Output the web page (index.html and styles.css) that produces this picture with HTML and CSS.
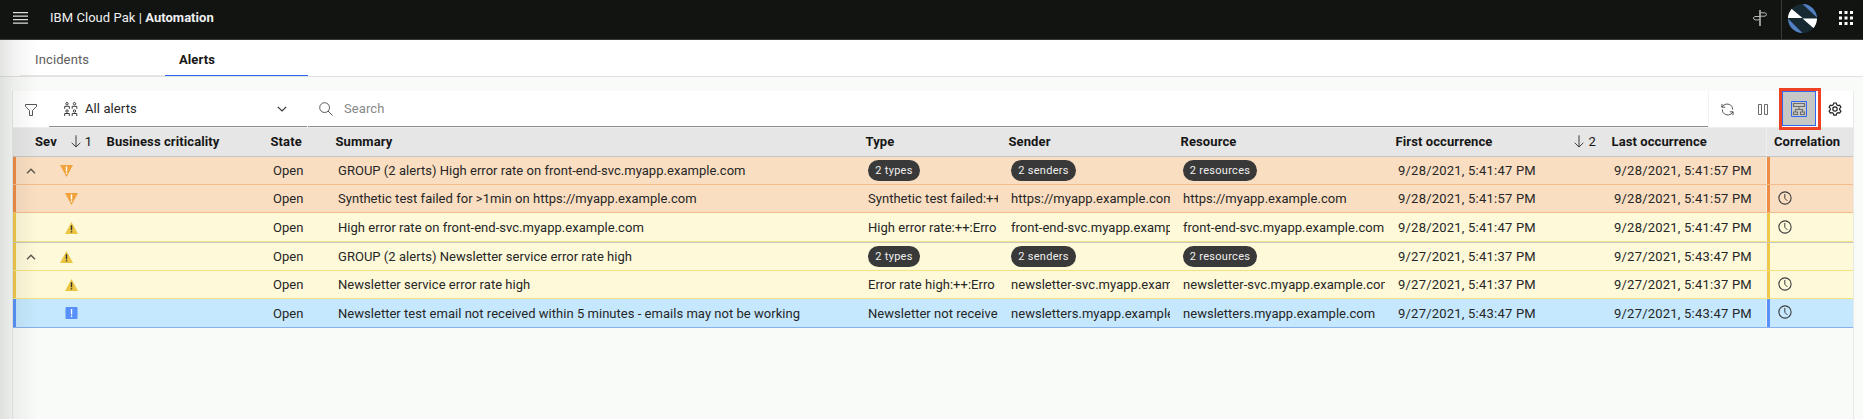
FILE: index.html
```
<!DOCTYPE html>
<html lang="en">
<head>
<meta charset="utf-8">
<title>Alerts</title>
<link rel="stylesheet" href="styles.css">
</head>
<body>
<svg class="defs" aria-hidden="true">
  <symbol id="tri-down" viewBox="0 0 13 12"><path d="M0 0h13L6.5 12z" fill="#f1a23c"/><path d="M5.8 1.5h1.4v5H5.8zM5.8 7.5h1.4v1.4H5.8z" fill="#fff"/></symbol>
  <symbol id="tri-up" viewBox="0 0 13 12"><path d="M6.5 0L13 12H0z" fill="#ecc642"/><path d="M5.8 3.2h1.4v5H5.8zM5.8 9.2h1.4v1.4H5.8z" fill="#333"/></symbol>
  <symbol id="square" viewBox="0 0 12 12"><rect width="12" height="12" rx="1" fill="#5790fa"/><path d="M5.4 2h1.3v5.4H5.4zM5.4 8.5h1.3v1.4H5.4z" fill="#fff"/></symbol>
  <symbol id="clock" viewBox="0 0 14 14"><circle cx="7" cy="7" r="6.1" fill="none" stroke="#3c3c3c" stroke-width="1.1"/><path d="M6.8 3v4.3l2.6 2.6" fill="none" stroke="#3c3c3c"/></symbol>
  <symbol id="arrow" viewBox="0 0 10 13"><path d="M5 .3v11.6M.7 7.8L5 12l4.3-4.2" fill="none" stroke="#3c3c3c"/></symbol>
  <symbol id="caret" viewBox="0 0 10 6"><path d="M1 5.2l4-4 4 4" fill="none" stroke="#5a554f" stroke-width="1.4"/></symbol>
</svg>
<header class="topbar">
  <svg class="menu" viewBox="0 0 15 12"><path d="M0 .7h15M0 4.2h15M0 7.7h15M0 11.2h15" stroke="#ddd" stroke-width="1.2"/></svg>
  <div class="brand"><span class="brand-name">IBM Cloud Pak |</span> <b>Automation</b></div>
  <svg class="signpost" viewBox="0 0 16 16" fill="none" stroke="#b5b5b5"><path d="M8 0v16" stroke-width="1.6"/><path d="M7.500 2.800h5.500l2 1.700-2 1.700H7.500M8 6.500H3L1 8.200l2 1.700h5"/></svg>
  <div class="account">
    <svg class="avatar" viewBox="0 0 29 29"><clipPath id="round"><circle cx="14.500" cy="14.500" r="14.500"/></clipPath><g clip-path="url(#round)"><path d="M0 0h29v29H0z" fill="#172931"/><path d="M14.500 0H29v13.500zM0 14.500V29h14.500z" fill="#537fc3"/><path d="M0 3.500h2L14.500 14H0zM14.500 14.500H29V25h-2.500z" fill="#fff"/></g></svg>
    <svg class="apps" viewBox="0 0 14 14" fill="#fff"><path d="M0 0h3v3H0zM5.500 0h3v3h-3zM11 0h3v3h-3zM0 5.500h3v3H0zM5.500 5.500h3v3h-3zM11 5.500h3v3h-3zM0 11h3v3H0zM5.500 11h3v3h-3zM11 11h3v3h-3z"/></svg>
  </div>
</header>
<nav class="tabs"><div class="tab">Incidents</div><div class="tab active">Alerts</div></nav>
<main class="panel">
  <div class="toolbar">
    <div class="filter"><svg width="12" height="12" viewBox="0 0 12 12"><path d="M.5.5h11v1.900L7.500 6.500v5h-3v-5l-4-4.100z" fill="none" stroke="#555"/></svg></div>
    <div class="select">
      <svg width="14" height="14" viewBox="0 0 14 14" fill="none" stroke="#3c3c3c"><circle cx="3" cy="1.700" r="1.200"/><circle cx="10.500" cy="1.700" r="1.200"/><circle cx="3" cy="9" r="1.200"/><circle cx="10.500" cy="9" r="1.200"/><path d="M.7 6.800V4.300h4.600v2.500M8.200 6.800V4.300h4.600v2.500M.7 14v-2.500h4.600V14M8.200 14v-2.500h4.600V14"/></svg>
      <span class="select-label">All alerts</span>
      <svg class="chevron" width="10" height="6" viewBox="0 0 10 6"><path d="M.8.8L5 5 9.200.8" fill="none" stroke="#333" stroke-width="1.200"/></svg>
    </div>
    <div class="search"><svg width="14" height="14" viewBox="0 0 14 14" fill="none" stroke="#5a5a5a"><circle cx="5.600" cy="5.600" r="4.900"/><path d="M9 9l4.500 4.500"/></svg><span>Search</span></div>
    <div class="actions">
      <svg class="refresh" viewBox="0 0 14 14" fill="none" stroke="#444"><path d="M1 4.500h3.500M1 1v3.500C3 .5 9 0 11.500 3.500c.8 1 1 2 1 3.500M13 9.500H9.500M13 13V9.500C11 13.500 5 14 2.500 10.500c-.8-1-1-2-1-3.500"/></svg>
      <svg class="pause" viewBox="0 0 10 11" fill="none" stroke="#6a6a6a"><path d="M.5.5h3v10h-3zM6.500.5h3v10h-3z"/></svg>
      <div class="highlight"><div class="toggle"><svg viewBox="0 0 16 16" fill="none"><path d="M2.500 2.500h11v3h-11zM8 5.500V9M4.500 11V8.500h7V11M2.500 11h4v2.500h-4zM9.500 11h4v2.500h-4z" stroke="#6d6e6c" stroke-width="1.100"/><path d="M.5.5h15v15H.5z" stroke="#2f67f0"/></svg></div></div>
      <svg class="gear" viewBox="0 0 14 14" fill="none" stroke="#222" stroke-width="1.200"><path d="M5.800 1h2.400l.5 1.700 1.300.8 1.700-.4 1.200 2.100-1.200 1.200v1.400l1.200 1.200-1.200 2-1.700-.4-1.300.8-.5 1.700H5.800l-.5-1.700-1.300-.8-1.700.4-1.200-2 1.200-1.200V6.400L1.100 5.200l1.200-2.100 1.700.4 1.300-.8z"/><circle cx="7" cy="7" r="2.200"/></svg>
    </div>
  </div>
  <div class="row head">
    <div class="sev">Sev<svg width="10" height="13"><use href="#arrow"/></svg><i>1</i></div><div>Business criticality</div><div>State</div><div>Summary</div><div>Type</div><div>Sender</div><div>Resource</div>
    <div class="first">First occurrence<svg width="10" height="13"><use href="#arrow"/></svg><i>2</i></div><div>Last occurrence</div><div class="corr">Correlation</div>
  </div>
  <div class="row major group">
    <div class="sev"><svg class="caret"><use href="#caret"/></svg><svg class="icon"><use href="#tri-down"/></svg></div><div></div><div>Open</div><div>GROUP (2 alerts) High error rate on front-end-svc.myapp.example.com</div><div><span class="pill types">2 types</span></div><div><span class="pill senders">2 senders</span></div><div><span class="pill resources">2 resources</span></div><div class="date">9/28/2021, 5:41:47 PM</div><div class="date">9/28/2021, 5:41:57 PM</div><div class="corr"></div>
  </div>
  <div class="row major">
    <div class="sev"><svg class="icon"><use href="#tri-down"/></svg></div><div></div><div>Open</div><div>Synthetic test failed for &gt;1min on https://myapp.example.com</div><div>Synthetic test failed:++</div><div>https://myapp.example.com</div><div>https://myapp.example.com</div><div class="date">9/28/2021, 5:41:57 PM</div><div class="date">9/28/2021, 5:41:57 PM</div><div class="corr"><svg class="clock"><use href="#clock"/></svg></div>
  </div>
  <div class="row minor tall last">
    <div class="sev"><svg class="icon"><use href="#tri-up"/></svg></div><div></div><div>Open</div><div>High error rate on front-end-svc.myapp.example.com</div><div>High error rate:++:Erro</div><div>front-end-svc.myapp.examp</div><div>front-end-svc.myapp.example.com</div><div class="date">9/28/2021, 5:41:47 PM</div><div class="date">9/28/2021, 5:41:47 PM</div><div class="corr"><svg class="clock"><use href="#clock"/></svg></div>
  </div>
  <div class="row minor group">
    <div class="sev"><svg class="caret"><use href="#caret"/></svg><svg class="icon"><use href="#tri-up"/></svg></div><div></div><div>Open</div><div>GROUP (2 alerts) Newsletter service error rate high</div><div><span class="pill types">2 types</span></div><div><span class="pill senders">2 senders</span></div><div><span class="pill resources">2 resources</span></div><div class="date">9/27/2021, 5:41:37 PM</div><div class="date">9/27/2021, 5:43:47 PM</div><div class="corr"></div>
  </div>
  <div class="row minor">
    <div class="sev"><svg class="icon"><use href="#tri-up"/></svg></div><div></div><div>Open</div><div>Newsletter service error rate high</div><div>Error rate high:++:Erro</div><div>newsletter-svc.myapp.exam</div><div>newsletter-svc.myapp.example.com</div><div class="date">9/27/2021, 5:41:37 PM</div><div class="date">9/27/2021, 5:41:37 PM</div><div class="corr"><svg class="clock"><use href="#clock"/></svg></div>
  </div>
  <div class="row info tall">
    <div class="sev"><svg class="icon"><use href="#square"/></svg></div><div></div><div>Open</div><div>Newsletter test email not received within 5 minutes - emails may not be working</div><div>Newsletter not receive</div><div>newsletters.myapp.example</div><div>newsletters.myapp.example.com</div><div class="date">9/27/2021, 5:43:47 PM</div><div class="date">9/27/2021, 5:43:47 PM</div><div class="corr"><svg class="clock"><use href="#clock"/></svg></div>
  </div>
</main>
<div class="edge-shadow"></div>
</body>
</html>
```
FILE: styles.css
```
* { box-sizing: border-box; }
body { margin: 0; height: 419px; overflow: hidden; display: flex; flex-direction: column; background: #f9fbf8; color: #262626; font: 13px/17px Roboto, "Liberation Sans", sans-serif; letter-spacing: .03px; }
svg { display: block; flex: none; }
.defs { position: absolute; width: 0; height: 0; }
.topbar { height: 40px; flex: none; display: flex; align-items: center; background: #111411; border-bottom: 1px solid #393939; color: #f0f0f0; padding: 0 10px 3px 13px; }
.menu { width: 15px; height: 12px; }
.brand { margin: 0 0 2px 22px; letter-spacing: .05px; }
.brand b { font-weight: 700; letter-spacing: .03px; }
.signpost { width: 16px; height: 16px; margin-left: auto; }
.account { height: 39px; margin: 0 0 -3px 13px; padding: 0 0 3px 6px; border-left: 1px solid #393939; display: flex; align-items: center; }
.avatar { width: 29px; height: 29px; }
.apps { width: 14px; height: 14px; margin-left: 22px; }
.tabs { height: 37px; flex: none; background: #fff; display: flex; padding-left: 20px; border-bottom: 1px solid #e0e2e0; }
.tab { width: 144px; margin-right: 1px; border-bottom: 1px solid #e6e6e6; padding: 11px 0 0 15px; color: #5c5c5c; letter-spacing: .12px; }
.tab.active { width: 143px; border-bottom-color: #2f67f0; color: #161616; font-weight: 700; letter-spacing: .1px; padding-left: 14px; }
.panel { margin: 14px 9px 0 12px; flex: 1; border: solid #e8eae8; border-width: 0 1px; }
.toolbar { height: 36px; display: flex; background: #fff; }
.filter { width: 36px; padding: 13px 0 0 12px; }
.select { width: 258px; border-bottom: 1px solid #8d8d8d; display: flex; align-items: center; padding: 0 20px 0 15px; }
.select-label { margin-left: 7px; letter-spacing: .1px; }
.chevron { margin-left: auto; }
.search { flex: 1; margin-left: 1px; border-bottom: 1px solid #8d8f8d; display: flex; align-items: center; gap: 11px; padding-left: 11px; color: #888; letter-spacing: .1px; }
.actions { width: 145px; display: flex; align-items: center; border-left: 1px solid #f2f2f2; padding-left: 12px; }
.refresh { width: 13px; height: 13px; }
.pause { width: 10px; height: 11px; margin-left: 24px; }
.highlight { width: 42px; height: 42px; flex: none; margin: 0 7px 0 11px; border: 3px solid #ee4023; z-index: 2; background: #fff; }
.toggle { width: 34px; height: 35px; background: #c6c8c5; border: 1px solid #2f67f0; display: grid; place-items: center; }
.toggle svg { width: 16px; height: 16px; }
.gear { width: 14px; height: 14px; }
.row { display: grid; grid-template-columns: 83px 164px 65px 530px 143px 172px 215px 216px 166px 86px; height: 28px; border-bottom: 1px solid #f4bb8b; }
.row > div { padding-left: 13px; display: flex; align-items: center; overflow: hidden; white-space: nowrap; }
.row.head { height: 30px; background: #e6e6e6; border-top: 1px solid #efefef; border-bottom: 1px solid #c4c6c4; font-weight: 700; color: #161616; letter-spacing: .1px; }
.row.head > div { padding: 0 0 2px 10.5px; }
.row.head > .sev { padding-left: 22px; border-left: 0; }
.head i { font-style: normal; font-weight: 400; margin-left: 4px; }
.sev svg:not(.icon, .caret) { margin-left: 14px; }
.first svg { margin-left: 82px; }
.row > .sev { border-left: 3px solid; padding-left: 49px; }
.group > .sev { padding-left: 10px; }
.caret { width: 10px; height: 6px; margin-right: 24px; }
.icon { width: 13px; height: 12px; }
.row > .corr { border-left: 3px solid; padding-left: 8px; box-shadow: -1px 0 #eef0ee; overflow: visible; }
.row.head > .corr { padding-left: 6px; border-left: 1px solid transparent; }
.clock { width: 14px; height: 14px; margin-bottom: 2px; }
.major { background: #fadec1; }
.major > .sev, .major > .corr { border-left-color: #f08b43; }
.minor { background: #fdf9d9; border-bottom-color: #f7e27b; }
.minor > .sev, .minor > .corr { border-left-color: #efc848; }
.tall { height: 29px; }
.last { height: 30px; border-bottom: 1px solid #c6c7c6; box-shadow: inset 0 -1px #f7e27b; }
.info { background: #c5e8fe; border-bottom-color: #86b0ef; }
.info > .sev, .info > .corr { border-left-color: #5790fa; }
.row > .date { letter-spacing: .22px; }
.pill { height: 21px; border-radius: 11px; background: #393939; color: #f0f0f0; font-size: 11px; line-height: 22px; text-align: center; letter-spacing: .3px; }
.types { width: 52px; }
.senders { width: 65px; }
.resources { width: 74px; }
.edge-shadow { position: absolute; left: 0; top: 40px; width: 38px; height: 379px; background: linear-gradient(90deg, rgba(60,70,55,.14), rgba(60,70,55,.07) 35%, rgba(60,70,55,0)); pointer-events: none; }
```
